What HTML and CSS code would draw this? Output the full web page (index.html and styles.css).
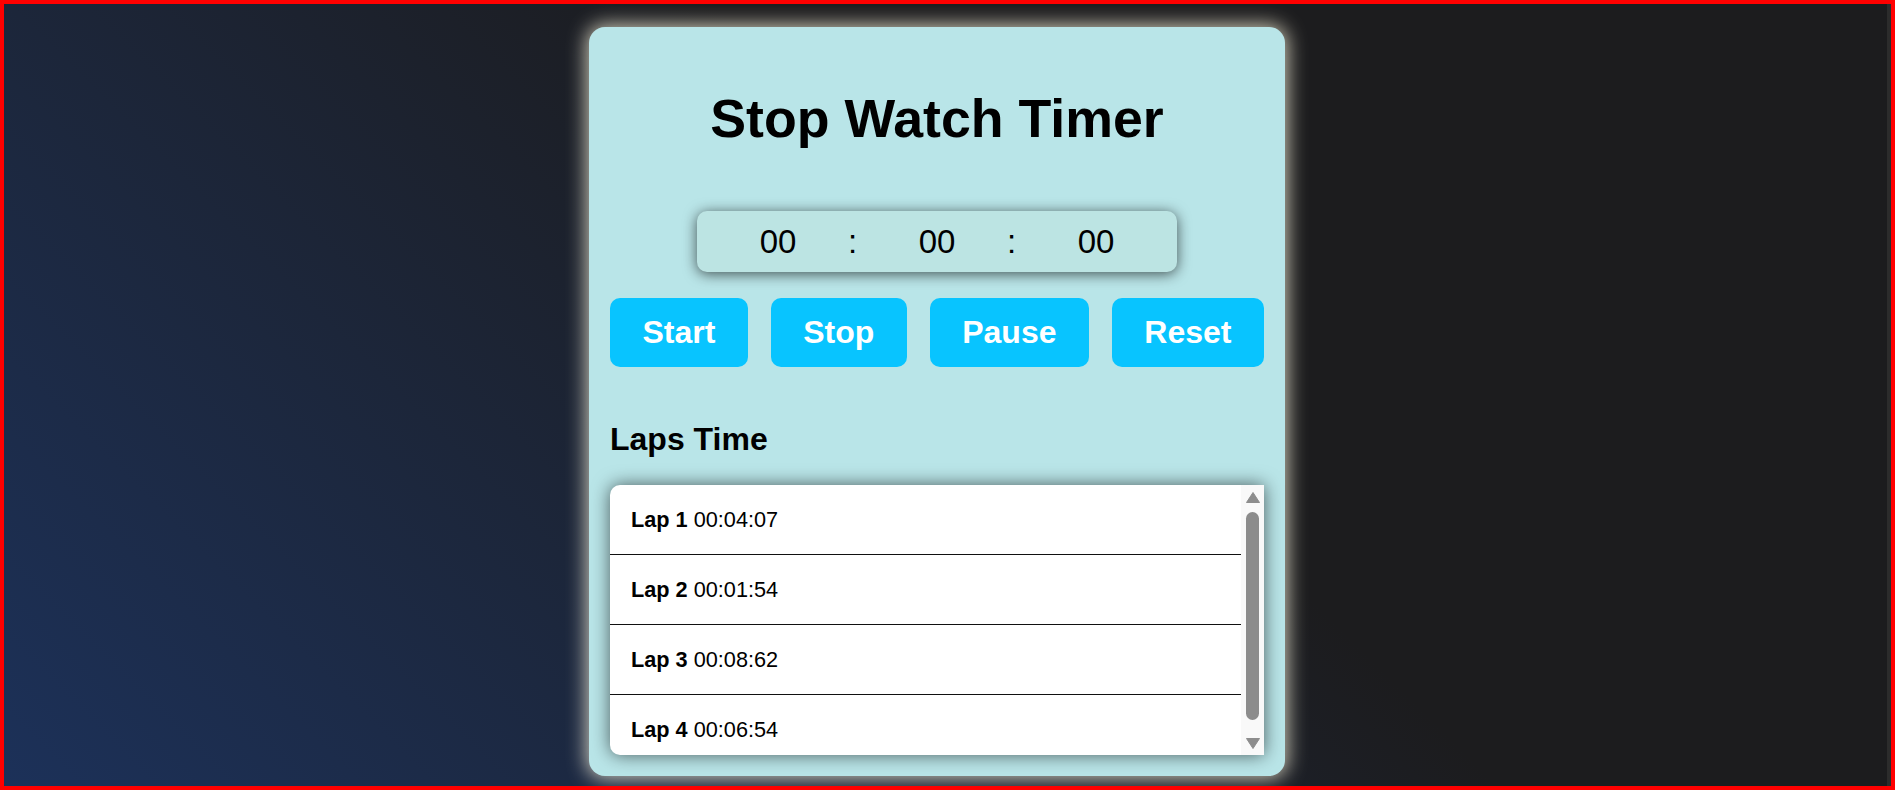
FILE: index.html
```html
<!DOCTYPE html>
<html lang="en">
<head>
<meta charset="utf-8">
<title>Stop Watch Timer</title>
<link rel="stylesheet" href="styles.css">
</head>
<body>
  <main class="card">
    <h1 class="title">Stop Watch Timer</h1>
    <div class="display">
      <span class="digits">00</span>
      <span class="colon">:</span>
      <span class="digits">00</span>
      <span class="colon">:</span>
      <span class="digits">00</span>
    </div>
    <div class="buttons">
      <button class="btn">Start</button>
      <button class="btn">Stop</button>
      <button class="btn">Pause</button>
      <button class="btn">Reset</button>
    </div>
    <h2 class="laps-title">Laps Time</h2>
    <div class="laps">
      <ul class="lap-list">
        <li class="lap"><b>Lap 1</b>&nbsp;00:04:07</li>
        <li class="lap"><b>Lap 2</b>&nbsp;00:01:54</li>
        <li class="lap"><b>Lap 3</b>&nbsp;00:08:62</li>
        <li class="lap"><b>Lap 4</b>&nbsp;00:06:54</li>
      </ul>
      <div class="scrollbar">
        <svg class="arrow" width="14" height="11" viewBox="0 0 14 11"><path d="M7 0.5 L13.5 10.5 H0.5 Z" fill="#8d8d8d" stroke="#8d8d8d" stroke-linejoin="round"/></svg>
        <div class="thumb"></div>
        <svg class="arrow arrow-down" width="14" height="11" viewBox="0 0 14 11"><path d="M0.5 0.5 H13.5 L7 10.5 Z" fill="#8d8d8d" stroke="#8d8d8d" stroke-linejoin="round"/></svg>
      </div>
    </div>
  </main>
</body>
</html>
```

FILE: styles.css
```css
html {
  background: #1c1c1e;
}

body {
  margin: 0;
  height: 790px;
  box-sizing: border-box;
  border: 4px solid #ff0000;
  padding: 23px 21px 0 0;
  display: flex;
  justify-content: center;
  align-items: flex-start;
  background: linear-gradient(45deg, #1c3159 0%, #1c1c1e 56%);
  box-shadow: inset -4px 0 0 #2c2c2c;
  font-family: "Liberation Sans", Arial, sans-serif;
  color: #000;
}

.card {
  width: 696px;
  height: 749px;
  box-sizing: border-box;
  padding: 0 21px 21px;
  background: #b9e5e8;
  border-radius: 16px;
  box-shadow: 0 0 20px 2px rgba(255, 250, 225, 0.8);
  display: flex;
  flex-direction: column;
}

.title {
  margin: 61px 0 0;
  font-size: 53.7px;
  line-height: 61px;
  font-weight: 700;
  text-align: center;
}

.display {
  align-self: center;
  width: 480px;
  height: 61px;
  margin-top: 62px;
  background: #bce4e3;
  border-radius: 10px;
  box-shadow: 0 2px 14px rgba(0, 0, 0, 0.65);
  display: flex;
  justify-content: center;
  align-items: center;
  font-size: 33px;
}

.digits {
  width: 100px;
  text-align: center;
}

.colon {
  width: 59px;
  box-sizing: border-box;
  padding-left: 20px;
}

.buttons {
  margin-top: 26px;
  display: flex;
  justify-content: space-between;
}

.btn {
  height: 69px;
  padding: 0 32.5px;
  border: none;
  border-radius: 10px;
  background: #08c4ff;
  color: #fff;
  font-family: "Liberation Sans", Arial, sans-serif;
  font-size: 32px;
  font-weight: 700;
}

.laps-title {
  margin: 54px 0 0;
  font-size: 32px;
  line-height: 37px;
  font-weight: 700;
}

.laps {
  margin-top: 27px;
  height: 270px;
  background: #fff;
  border-radius: 10px 0 0 10px;
  box-shadow: 0 0 18px rgba(0, 0, 0, 0.6);
  display: flex;
  overflow: hidden;
}

.lap-list {
  flex: 1;
  margin: 0;
  padding: 0;
  list-style: none;
  overflow: hidden;
}

.lap {
  height: 69px;
  border-bottom: 1px solid #111;
  padding-left: 21px;
  display: flex;
  align-items: center;
  font-size: 21.7px;
}

.scrollbar {
  width: 23px;
  background: #f9f9f9;
  display: flex;
  flex-direction: column;
  align-items: center;
  padding-top: 7px;
  box-sizing: border-box;
}

.arrow {
  display: block;
}

.thumb {
  width: 13px;
  height: 208px;
  margin-top: 9px;
  border-radius: 7px;
  background: #8c8c8c;
}

.arrow-down {
  margin-top: 18px;
}
```
